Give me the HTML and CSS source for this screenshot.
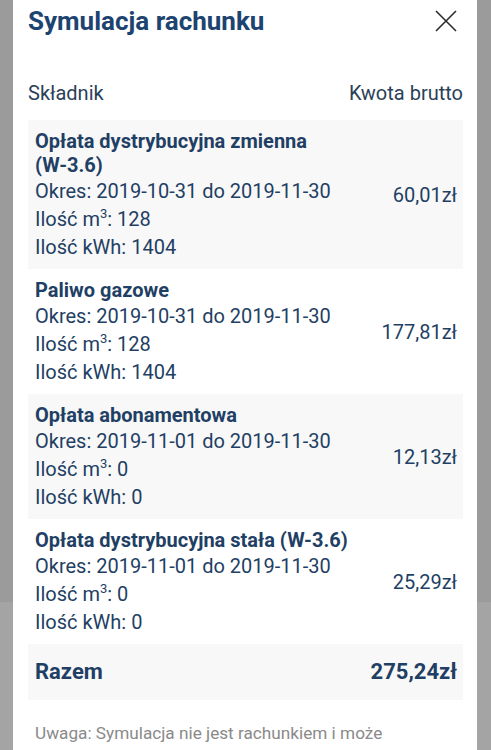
FILE: index.html
```html
<!DOCTYPE html>
<html lang="pl">
<head>
    <meta charset="UTF-8">
    <meta name="viewport" content="width=device-width, initial-scale=1.0">
    <title>Symulacja rachunku</title>

    <link rel="stylesheet" href="styles.css">
</head>
<body>
    <div class="modal">
        <div class="modal-head">
            <h1>Symulacja rachunku</h1>
            <button class="close" aria-label="Zamknij">
                <svg width="22" height="22" viewBox="0 0 22 22">
                    <path d="M1 1 L21 21 M21 1 L1 21" stroke="#2b2b2b" stroke-width="1.6" fill="none"/>
                </svg>
            </button>
        </div>

        <div class="cols">
            <span>Składnik</span>
            <span>Kwota brutto</span>
        </div>

        <div class="rows">
            <div class="row">
                <div class="info">
                    <div class="name">Opłata dystrybucyjna zmienna <span class="code">(W-3.6)</span></div>
                    <div>Okres: 2019-10-31 do 2019-11-30</div>
                    <div>Ilość m<sup>3</sup>: 128</div>
                    <div>Ilość kWh: 1404</div>
                </div>
                <div class="amount">60,01zł</div>
            </div>
            <div class="row">
                <div class="info">
                    <div class="name">Paliwo gazowe</div>
                    <div>Okres: 2019-10-31 do 2019-11-30</div>
                    <div>Ilość m<sup>3</sup>: 128</div>
                    <div>Ilość kWh: 1404</div>
                </div>
                <div class="amount">177,81zł</div>
            </div>
            <div class="row">
                <div class="info">
                    <div class="name">Opłata abonamentowa</div>
                    <div>Okres: 2019-11-01 do 2019-11-30</div>
                    <div>Ilość m<sup>3</sup>: 0</div>
                    <div>Ilość kWh: 0</div>
                </div>
                <div class="amount">12,13zł</div>
            </div>
            <div class="row">
                <div class="info">
                    <div class="name">Opłata dystrybucyjna stała <span class="code">(W-3.6)</span></div>
                    <div>Okres: 2019-11-01 do 2019-11-30</div>
                    <div>Ilość m<sup>3</sup>: 0</div>
                    <div>Ilość kWh: 0</div>
                </div>
                <div class="amount">25,29zł</div>
            </div>
            <div class="row total">
                <div>Razem</div>
                <div>275,24zł</div>
            </div>
        </div>

        <p class="note">Uwaga: Symulacja nie jest rachunkiem i może się różnić od rozliczenia wykonanego przez BOK.</p>
    </div>
</body>
</html>
```

FILE: styles.css
```css
* {
    box-sizing: border-box;
    font-family: Roboto, "Liberation Sans", sans-serif;
}

body {
    margin: 0;
    height: 750px;
    overflow: hidden;
    background: linear-gradient(#9b9b9b 0, #9b9b9b 602px, #a4a4a4 602px);
}

.modal {
    margin: 0 14px 0 13px;
    height: 100%;
    background: #fff;
    padding: 0 14px 0 15px;
    color: #1f3f64;
}

.modal-head {
    display: flex;
    justify-content: space-between;
    align-items: center;
    height: 42px;
}

h1 {
    margin: 0;
    font-size: 26px;
    font-weight: 700;
    color: #1d4470;
}

button.close {
    border: none;
    background: none;
    padding: 0;
    margin-right: 6px;
    display: flex;
}

.cols {
    display: flex;
    justify-content: space-between;
    margin-top: 37px;
    font-size: 20px;
    line-height: 28px;
    color: #2b3f58;
}

.rows {
    margin-top: 13px;
}

.row {
    display: flex;
    justify-content: space-between;
    align-items: center;
    padding: 9px 6px 8px 7px;
    font-size: 20px;
    line-height: 28px;
}

.row:nth-child(odd) {
    background: #f8f8f8;
}

.name {
    font-weight: 700;
    line-height: 24px;
    padding-right: 30px;
}

.code {
    white-space: nowrap;
}

sup {
    font-size: 13px;
    line-height: 0;
}

.amount {
    white-space: nowrap;
}

.row.total {
    padding-top: 14px;
    padding-bottom: 14px;
    font-size: 22px;
    font-weight: 700;
}

.note {
    margin: 21px 0 0;
    padding: 0 58px 0 7px;
    font-size: 17.2px;
    line-height: 25px;
    color: #8a8a8a;
}
```
